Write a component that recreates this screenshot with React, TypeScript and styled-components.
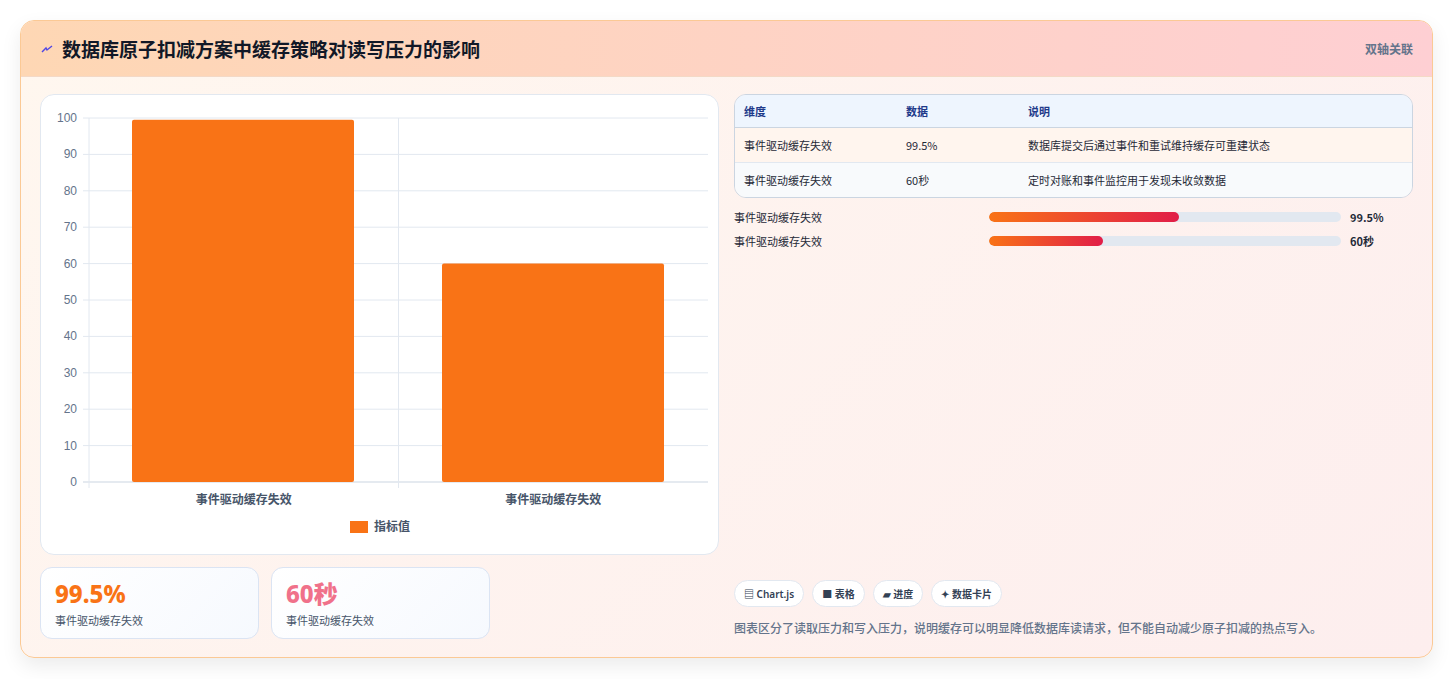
import React from "react";
import styled, { createGlobalStyle } from "styled-components";

const Global = createGlobalStyle`
  html, body { margin: 0; padding: 0; background: #fff; }
  body { font-family: "Noto Sans", "Noto Sans CJK SC", sans-serif; }
`;

const Page = styled.div`
  padding: 20px 20px 21px 20px;
  height: 679px;
  box-sizing: border-box;
`;

const Card = styled.div`
  border: 1px solid #fbc995;
  border-radius: 14px;
  overflow: hidden;
  background: linear-gradient(135deg, #fff7ef 0%, #fdeeee 100%);
  box-shadow: 0 8px 20px rgba(0,0,0,0.08);
  height: 638px;
  box-sizing: border-box;
  display: flex;
  flex-direction: column;
`;

const Header = styled.div`
  height: 55px;
  flex: none;
  display: flex;
  align-items: center;
  justify-content: space-between;
  padding: 0 19px 0 20px;
  background: linear-gradient(90deg, #fed7b4 0%, #fecfd3 100%);
  border-bottom: 1px solid #f4d9c6;
`;

const Title = styled.h1`
  margin: 0;
  font-size: 19px;
  font-weight: 700;
  color: #111827;
  display: flex;
  align-items: center;
  gap: 9px;
  font-family: "Noto Sans CJK SC", sans-serif;
`;

const Tag = styled.span`
  font-size: 12px;
  color: #64748b;
  font-weight: 600;
  font-family: "Noto Sans CJK SC", sans-serif;
`;

const Body = styled.div`
  flex: 1;
  display: grid;
  grid-template-columns: 679px 679px;
  gap: 15px;
  padding: 17px 19px 19px 19px;
`;

const Col = styled.div`
  display: flex;
  flex-direction: column;
`;

const ChartCard = styled.div`
  height: 461px;
  background: #fff;
  border: 1px solid #e2e8f0;
  border-radius: 14px;
  box-sizing: border-box;
`;

const Stats = styled.div`
  display: flex;
  gap: 12px;
  margin-top: 12px;
`;

const Stat = styled.div`
  width: 219px;
  height: 72px;
  box-sizing: border-box;
  border: 1px solid #dbe4f3;
  border-radius: 12px;
  background: linear-gradient(135deg, #fff 0%, #f6f9fe 100%);
  padding: 10px 14px;
`;

const StatValue = styled.div<{ $c: string }>`
  font-size: 24px;
  font-weight: 800;
  color: ${(p) => p.$c};
  line-height: 32px;
  font-family: "Noto Sans", "Noto Sans CJK SC", sans-serif;
`;

const StatLabel = styled.div`
  font-size: 11px;
  color: #475569;
  margin-top: 2px;
  font-family: "Noto Sans CJK SC", sans-serif;
`;

const Table = styled.table`
  width: 100%;
  border-collapse: separate;
  border-spacing: 0;
  border: 1px solid #cbd5e1;
  border-radius: 12px;
  overflow: hidden;
  font-size: 11px;
  font-family: "Noto Sans CJK SC", sans-serif;
`;

const Th = styled.th<{ $w?: string }>`
  text-align: left;
  background: #eef5fe;
  color: #1e3a8a;
  font-weight: 600;
  height: 32px;
  padding: 0 9px;
  border-bottom: 1px solid #cbd5e1;
  width: ${(p) => p.$w || "auto"};
`;

const Td = styled.td<{ $alt?: boolean; $last?: boolean }>`
  height: 34px;
  padding: 0 9px;
  color: #1f2937;
  background: ${(p) => (p.$alt ? "#f8fafc" : "#fff5ee")};
  border-bottom: ${(p) => (p.$last ? "none" : "1px solid #e2e8f0")};
`;

const Bars = styled.div`
  margin-top: 11px;
  display: flex;
  flex-direction: column;
  gap: 9px;
`;

const BarRow = styled.div`
  display: grid;
  grid-template-columns: 255px 352px 1fr;
  align-items: center;
  column-gap: 0;
  font-size: 11px;
  height: 15px;
  font-family: "Noto Sans CJK SC", sans-serif;
  color: #1f2937;
`;

const Track = styled.div`
  height: 10px;
  border-radius: 5px;
  background: #e2e8f0;
  overflow: hidden;
`;

const Fill = styled.div`
  height: 100%;
  border-radius: 5px;
  background: linear-gradient(90deg, #f97316, #e11d48);
`;

const BarVal = styled.span`
  font-weight: 700;
  padding-left: 9px;
`;

const Spacer = styled.div`flex: 1;`;

const Chips = styled.div`
  display: flex;
  gap: 8px;
`;

const Chip = styled.span`
  height: 27px;
  box-sizing: border-box;
  padding: 0 9px;
  display: inline-flex;
  align-items: center;
  gap: 4px;
  border: 1px solid #e2e8f0;
  border-radius: 14px;
  background: #fff;
  font-size: 10px;
  font-weight: 600;
  color: #334155;
  font-family: "Noto Sans", "Noto Sans CJK SC", sans-serif;
`;

const Note = styled.p`
  margin: 12px 0 3px;
  font-size: 12px;
  color: #64748b;
  font-weight: 500;
  font-family: "Noto Sans CJK SC", sans-serif;
`;

function Chart() {
  const x0 = 48, x1 = 667, yTop = 23, yBot = 387;
  const ticks = Array.from({ length: 11 }, (_, i) => i * 10);
  const yOf = (v: number) => yBot - (v / 100) * (yBot - yTop);
  const mid = (x0 + x1) / 2;
  const bars = [
    { v: 99.5, x: 91 },
    { v: 60, x: 401 },
  ];
  return (
    <svg width="679" height="459" style={{ display: "block" }}>
      {ticks.map((t) => (
        <g key={t}>
          <line x1={x0 - 6} x2={x1} y1={yOf(t)} y2={yOf(t)} stroke={t === 0 ? "#cbd5e1" : "#e2e8f0"} />
          <text x={x0 - 12} y={yOf(t) + 4} textAnchor="end" fontSize="12" fill="#64748b" fontFamily="Liberation Sans, sans-serif">{t}</text>
        </g>
      ))}
      <line x1={x0} x2={x0} y1={yTop} y2={yBot + 6} stroke="#e2e8f0" />
      <line x1={mid} x2={mid} y1={yTop} y2={yBot + 6} stroke="#e2e8f0" />
      {bars.map((b, i) => (
        <rect key={i} x={b.x} y={yOf(b.v)} width={222} height={yBot - yOf(b.v)} fill="#f97316" rx="2" />
      ))}
      {[x0 + (mid - x0) / 2, mid + (x1 - mid) / 2].map((cx, i) => (
        <text key={i} x={cx} y={409} textAnchor="middle" fontSize="12" fill="#475569" fontWeight="600" fontFamily="Noto Sans CJK SC, sans-serif">事件驱动缓存失效</text>
      ))}
      <rect x={309} y={426} width={18} height={12} fill="#f97316" />
      <text x={333} y={436} fontSize="12" fill="#475569" fontWeight="600" fontFamily="Noto Sans CJK SC, sans-serif">指标值</text>
    </svg>
  );
}

export default function App() {
  return (
    <>
      <Global />
      <Page>
        <Card>
          <Header>
            <Title>
              <svg width="12" height="12" viewBox="0 0 12 12"><path d="M1 9 L5 5 L6 7 L11 3" stroke="#4f46e5" strokeWidth="1.4" fill="none" /></svg>
              数据库原子扣减方案中缓存策略对读写压力的影响
            </Title>
            <Tag>双轴关联</Tag>
          </Header>
          <Body>
            <Col>
              <ChartCard><Chart /></ChartCard>
              <Stats>
                <Stat><StatValue $c="#f97316">99.5%</StatValue><StatLabel>事件驱动缓存失效</StatLabel></Stat>
                <Stat><StatValue $c="#f0718a">60秒</StatValue><StatLabel>事件驱动缓存失效</StatLabel></Stat>
              </Stats>
            </Col>
            <Col>
              <Table>
                <thead>
                  <tr><Th $w="144px">维度</Th><Th $w="104px">数据</Th><Th>说明</Th></tr>
                </thead>
                <tbody>
                  <tr><Td>事件驱动缓存失效</Td><Td>99.5%</Td><Td>数据库提交后通过事件和重试维持缓存可重建状态</Td></tr>
                  <tr><Td $alt $last>事件驱动缓存失效</Td><Td $alt $last>60秒</Td><Td $alt $last>定时对账和事件监控用于发现未收敛数据</Td></tr>
                </tbody>
              </Table>
              <Bars>
                <BarRow><span>事件驱动缓存失效</span><Track><Fill style={{ width: "54%" }} /></Track><BarVal>99.5%</BarVal></BarRow>
                <BarRow><span>事件驱动缓存失效</span><Track><Fill style={{ width: "32.5%" }} /></Track><BarVal>60秒</BarVal></BarRow>
              </Bars>
              <Spacer />
              <Chips>
                <Chip>▤ Chart.js</Chip>
                <Chip>■ 表格</Chip>
                <Chip>▰ 进度</Chip>
                <Chip>✦ 数据卡片</Chip>
              </Chips>
              <Note>图表区分了读取压力和写入压力，说明缓存可以明显降低数据库读请求，但不能自动减少原子扣减的热点写入。</Note>
            </Col>
          </Body>
        </Card>
      </Page>
    </>
  );
}
